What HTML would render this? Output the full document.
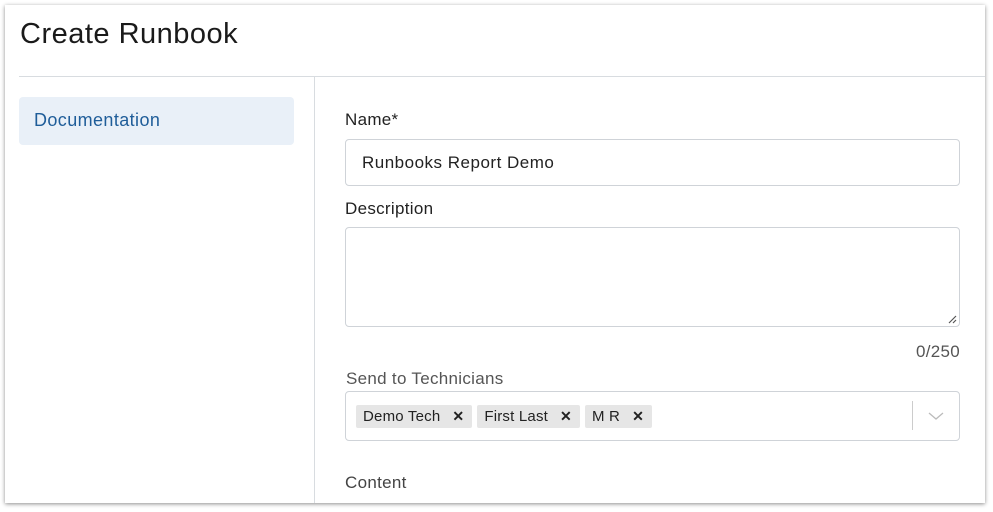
<!DOCTYPE html>
<html><head><meta charset="utf-8"><style>
*{box-sizing:border-box;margin:0;padding:0}
body{width:993px;height:512px;background:#fff;font-family:"Liberation Sans",sans-serif;position:relative;overflow:hidden}
.card{position:absolute;left:5px;top:5px;width:980px;height:498px;background:#fff;box-shadow:0 1px 4px rgba(0,0,0,.45)}
.title{position:absolute;left:20px;top:18px;font-size:29px;color:#1a1a1a;letter-spacing:.5px}
.hline{position:absolute;left:19px;top:76px;width:966px;height:1px;background:#d8dce0}
.vline{position:absolute;left:314px;top:77px;width:1px;height:426px;background:#d8dce0}
.nav{position:absolute;left:19px;top:97px;width:275px;height:48px;background:#e9f0f8;border-radius:4px;color:#1f5d99;font-size:18px;padding:13px 0 0 15px;letter-spacing:.4px}
.lbl{position:absolute;font-size:17px;color:#222;letter-spacing:.3px}
.inp{position:absolute;left:345px;width:615px;border:1px solid #cfd3d8;border-radius:4px;background:#fff}
.tag{display:inline-block;background:#e6e6e6;border-radius:2px;height:23px;font-size:15px;color:#222;padding:3px 8px 0 7px;margin-right:5px;letter-spacing:.2px}
.tag b{font-weight:bold;margin-left:12px;font-size:14px}
</style></head><body>
<div class="card"></div>
<div class="title">Create Runbook</div>
<div class="hline"></div>
<div class="vline"></div>
<div class="nav">Documentation</div>
<div class="lbl" style="left:345px;top:110px">Name*</div>
<div class="inp" style="top:139px;height:47px;font-size:17px;color:#222;padding:13px 0 0 16px;letter-spacing:.5px">Runbooks Report Demo</div>
<div class="lbl" style="left:345px;top:199px">Description</div>
<div class="inp" style="top:227px;height:100px">
<svg style="position:absolute;right:2px;bottom:2px" width="9" height="9"><path d="M8 1L1 8M8 5L5 8" stroke="#555" stroke-width="1.2"/></svg></div>
<div class="lbl" style="right:33px;top:342px;color:#555">0/250</div>
<div class="lbl" style="left:346px;top:369px;color:#555">Send to Technicians</div>
<div class="inp" style="top:391px;height:50px;padding:13px 0 0 10px">
<span class="tag">Demo Tech<b>✕</b></span><span class="tag">First Last<b>✕</b></span><span class="tag">M R<b>✕</b></span>
<div style="position:absolute;left:566px;top:9px;width:1px;height:29px;background:#ccc"></div>
<svg style="position:absolute;left:582px;top:19px" width="16" height="10"><path d="M1 2L8 8L15 2" stroke="#bbb" fill="none" stroke-width="1.3"/></svg>
</div>
<div class="lbl" style="left:345px;top:473px;color:#444">Content</div>
</body></html>
